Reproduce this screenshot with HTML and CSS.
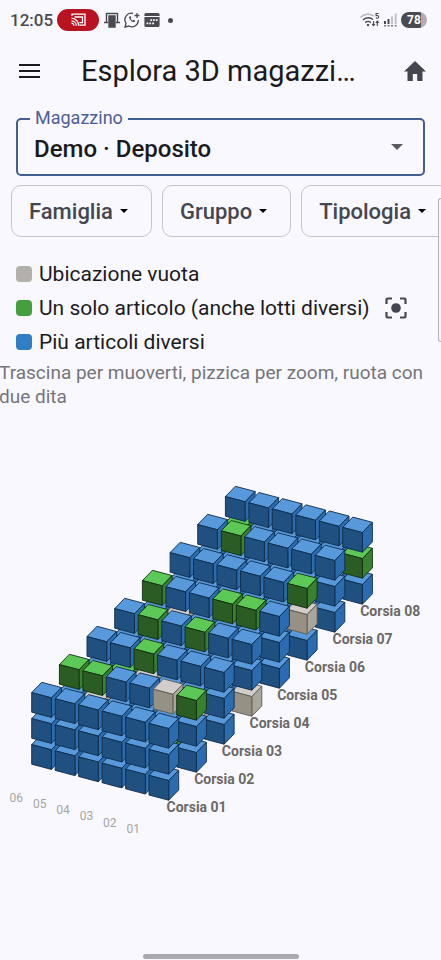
FILE: index.html
```html
<!DOCTYPE html>
<html lang="it">
  <head>
    <meta charset="UTF-8" />
    <meta name="viewport" content="width=device-width, initial-scale=1.0" />
    <title>Esplora 3D magazzino</title>
    <link rel="stylesheet" href="styles.css">
  </head>
  <body>
    <div class="status-bar">
      <span class="clock">12:05</span>
      <span class="cast-pill">
        <svg width="16" height="14" viewBox="0 0 16 14" fill="none" stroke="#fff" stroke-width="1.3">
          <path d="M2 3V1.2h13v11H9.5M4.5 4h8v5.7H9.5" />
          <path d="M1.5 5.2a7.6 7.6 0 0 1 7.2 7.6M1.5 7.8a5 5 0 0 1 4.8 5M1.5 10.2a2.6 2.6 0 0 1 2.4 2.6" />
        </svg>
      </span>
      <svg width="16" height="16" viewBox="0 0 16 16" fill="none" stroke="#4b4a50" stroke-width="1.4">
        <path d="M2.5 10V1.5h11V10M0 10.5h4M12 10.5h4" />
        <path d="M5 4h6v11H5z" fill="#4b4a50" />
      </svg>
      <svg width="16" height="16" viewBox="0 0 16 16" fill="none" stroke="#4b4a50" stroke-width="1.3">
        <path d="M9 1.5A6.3 6.3 0 0 0 2 11l-1 4 4-1A6.3 6.3 0 0 0 14.3 8M10.5 3.5h5M13 1v5" />
        <path d="M5.2 4.8c-.7 1.8 2.8 6 5.3 5.2l.8-1.3-1.8-1-.8.8c-1-.4-1.7-1.2-2-2l.6-.8-.8-1.6z" fill="#4b4a50" stroke="none" />
      </svg>
      <svg width="16" height="16" viewBox="0 0 16 16">
        <path d="M2 1h12a1.6 1.6 0 0 1 1.6 1.6V4H.4V2.6A1.6 1.6 0 0 1 2 1zM.4 5h15.200v8.500A1.600 1.600 0 0 1 14 15H2a1.600 1.600 0 0 1-1.600-1.500z" fill="#4b4a50" />
        <path d="M6.3 7.2h1.8V9H6.3zM9 7.2h1.8V9H9zM11.8 7.2h1.8V9h-1.8zM2.5 10.5h1.8v1.8H2.5zM5.3 10.5h1.8v1.8H5.3zM8.2 10.5H10v1.8H8.2z" fill="#faf8ff" />
      </svg>
      <span class="dot"></span>
      <span class="spacer"></span>
      <svg width="20" height="16" viewBox="0 0 20 16" fill="none" stroke="#4b4a50" stroke-width="1.5">
        <path d="M.5 5.5A10.5 10.5 0 0 1 14 4" stroke="#b9b7be" />
        <path d="M3 8a7.2 7.2 0 0 1 10-.5M5.2 10.6a4 4 0 0 1 5.6 0" />
        <circle cx="8" cy="13" r="1.2" fill="#4b4a50" stroke="none" />
        <path d="M18.6 1.5h-2.5v2.2c1.5-.5 2.7.1 2.6 1.3-.1 1.3-1.7 1.6-2.7.8M13.5 9v4.500m-1.500-1.500 1.500 1.700 1.500-1.700M17.300 14V9.300m-1.500 1.600 1.500-1.700 1.500 1.700" stroke-width="1.1" />
      </svg>
      <svg width="13" height="16" viewBox="0 0 13 16">
        <path d="M0 9h2v3H0zM3.5 7h2v5h-2z" fill="#4b4a50" />
        <path d="M7 4.5h2V12H7zM10.7 1.5h2V12h-2z" fill="#c3c1c8" />
        <path d="M0 13h2v1.5H0zM3.5 13h2v1.5h-2zM7 13h2v1.5H7zM10.7 13h2v1.5h-2z" fill="#77757c" />
      </svg>
      <span class="battery">78</span>
    </div>

    <header class="app-bar">
      <button class="icon-button" aria-label="Menu">
        <svg width="24" height="24" viewBox="0 0 24 24" stroke="#1a1b21" stroke-width="2">
          <path d="M1 6h21M1 12h21M1 18h21" />
        </svg>
      </button>
      <h1>Esplora 3D magazzi…</h1>
      <a class="icon-button" href="#" aria-label="Home">
        <svg width="24" height="24" viewBox="0 0 24 24" fill="#44474f">
          <path d="M9.8 22v-7h4.4v7h5.3v-9.500H23L12 2 1 12.500h3.500V22z" />
        </svg>
      </a>
    </header>

    <main>
      <div class="field">
        <label for="magazzino">Magazzino</label>
        <select id="magazzino">
          <option>Demo · Deposito</option>
        </select>
        <svg class="field-arrow" width="12" height="6" viewBox="0 0 12 6" fill="#5c5c62">
          <path d="M0 0h12L6 6z" />
        </svg>
      </div>

      <div class="filters">
        <button class="chip">Famiglia <svg width="8" height="4" viewBox="0 0 8 4"><path d="M0 0h8L4 4z" /></svg></button>
        <button class="chip">Gruppo <svg width="8" height="4" viewBox="0 0 8 4"><path d="M0 0h8L4 4z" /></svg></button>
        <button class="chip">Tipologia <svg width="8" height="4" viewBox="0 0 8 4"><path d="M0 0h8L4 4z" /></svg></button>
      </div>

      <div class="legend-row">
        <ul class="legend">
          <li><span class="swatch empty"></span>Ubicazione vuota</li>
          <li><span class="swatch single"></span>Un solo articolo (anche lotti diversi)</li>
          <li><span class="swatch multi"></span>Più articoli diversi</li>
        </ul>
        <button class="icon-button" aria-label="Centra vista">
          <svg width="22" height="22" viewBox="0 0 22 22" fill="none" stroke="#44474f" stroke-width="2.2">
            <path d="M1.5 7V2.5a1 1 0 0 1 1-1H7M15 1.5h4.5a1 1 0 0 1 1 1V7M20.5 15v4.5a1 1 0 0 1-1 1H15M7 20.5H2.500a1 1 0 0 1-1-1V15" />
            <circle cx="11" cy="11" r="4.8" fill="#44474f" stroke="none" />
          </svg>
        </button>
      </div>

      <p class="hint">Trascina per muoverti, pizzica per zoom, ruota con due dita</p>

      <svg id="scene" class="scene" viewBox="0 0 441 440"></svg>
    </main>

    <div class="side-panel"></div>
    <div class="home-indicator"></div>

    <script src="scene.js"></script>
  </body>
</html>
```
FILE: styles.css
```css
* {
  box-sizing: border-box;
}
body {
  margin: 0;
  min-height: 100vh;
  display: flex;
  flex-direction: column;
  position: relative;
  background-color: #faf8ff;
  color: #1a1b21;
  font-family: Roboto, sans-serif;
}
button,
select {
  font-family: inherit;
}

/* status bar */
.status-bar {
  display: flex;
  align-items: center;
  gap: 4px;
  height: 40px;
  padding: 0 14px 0 10px;
}
.clock {
  font-size: 17px;
  font-weight: 500;
  color: #4b4a50;
}
.cast-pill {
  display: flex;
  align-items: center;
  justify-content: center;
  width: 42px;
  height: 22px;
  margin-right: 1px;
  border-radius: 11px;
  background-color: #b91220;
}
.dot {
  width: 5px;
  height: 5px;
  margin-left: 4px;
  border-radius: 50%;
  background-color: #4b4a50;
}
.spacer {
  flex: 1;
}
.battery {
  width: 26px;
  height: 16px;
  border-radius: 8px;
  background: linear-gradient(to right, #4b4a50 78%, #b0aeb4 78%);
  color: #fff;
  font-size: 12px;
  font-weight: 700;
  line-height: 16px;
  text-align: center;
}

/* app bar */
.app-bar {
  display: flex;
  align-items: center;
  height: 62px;
  padding: 0 14px 0 18px;
}
.app-bar h1 {
  flex: 1;
  margin: 0 0 0 39px;
  font-size: 29px;
  font-weight: 400;
  white-space: nowrap;
}
.icon-button {
  display: flex;
  padding: 0;
  border: none;
  background: none;
  cursor: pointer;
}

/* warehouse select */
main {
  flex: 1;
}
.field {
  position: relative;
  margin: 16px 16px 0;
}
.field label {
  position: absolute;
  top: -10px;
  left: 14px;
  padding: 0 5px;
  background-color: #faf8ff;
  color: #4b6094;
  font-size: 18px;
  line-height: 20px;
}
.field select {
  width: 100%;
  height: 58px;
  padding: 4px 16px 0;
  border: 2px solid #435e91;
  border-radius: 5px;
  appearance: none;
  background: none;
  color: #1a1b21;
  font-size: 24px;
  font-weight: 500;
}
.field-arrow {
  position: absolute;
  top: 26px;
  right: 22px;
  pointer-events: none;
}

/* filter chips */
.filters {
  display: flex;
  gap: 10px;
  margin-top: 9px;
  padding-left: 11px;
  overflow: hidden;
}
.chip {
  display: flex;
  flex-shrink: 0;
  align-items: center;
  gap: 7px;
  height: 52px;
  padding: 0 23px 0 17px;
  border: 1px solid #c4c4cc;
  border-radius: 10px;
  background: none;
  color: #44474f;
  font-size: 22px;
  font-weight: 500;
}

/* legend */
.legend-row {
  display: flex;
  align-items: center;
  justify-content: space-between;
  padding: 20px 34px 0 16px;
}
.legend {
  margin: 0;
  padding: 0;
  list-style: none;
}
.legend li {
  display: flex;
  align-items: center;
  gap: 7px;
  height: 34px;
  font-size: 21px;
  white-space: nowrap;
}
.swatch {
  width: 16px;
  height: 16px;
  border-radius: 4px;
}
.empty {
  background-color: #b3b1a8;
}
.single {
  background-color: #43a03d;
}
.multi {
  background-color: #307dc4;
}
.hint {
  margin: 2px 0 0 -1px;
  color: #74757c;
  font-size: 19px;
  line-height: 24px;
}

/* 3D view */
.scene {
  display: block;
  width: 100%;
  margin-top: 31px;
}
.aisle-label {
  fill: #6b6966;
  font-size: 14px;
  font-weight: 700;
}
.column-label {
  fill: #a6a4a1;
  font-size: 12px;
}

.side-panel {
  position: absolute;
  top: 198px;
  right: 0;
  width: 3px;
  height: 144px;
  border: 1px solid #b4b4bc;
  border-right: none;
  border-radius: 3px 0 0 3px;
  background-color: #f7f5fc;
}
.home-indicator {
  position: absolute;
  bottom: 1px;
  left: 50%;
  width: 156px;
  height: 5px;
  margin-left: -78px;
  border-radius: 3px;
  background-color: #aba9b0;
}
```
FILE: scene.js
```js
const colors = {
  B: { top: "#5799da", front: "#20507f", side: "#2b6cb0", edge: "#0f2d4c" },
  G: { top: "#5cc957", front: "#2a5c24", side: "#38822f", edge: "#12300f" },
  E: { top: "#d0cdca", front: "#969085", side: "#aaa69c", edge: "#5f5b54" },
};

// one entry per aisle, levels from bottom to top, columns from 06 to 01
const aisles = [
  ["BBBBBB", "BBBBBB", "BBBBBB"],
  ["BBBBGB", "BEBBBB", "GGBBEG"],
  ["BBBBEB", "BGEBBB", "BBGBBB"],
  ["BBBBBE", "BBBBBB", "BGBGBB"],
  ["BBBBBB", "BEBBBB", "GBBGGB"],
  ["BBBBBB", "BBBBBE", "BBBBBG"],
  ["BBBBBB", "BBBBBB", "BGBBBB"],
  ["BBBBBB", "GBBBBG", "BBBBBB"],
];

function face(points, fill, edge) {
  const list = points.map((p) => p[0].toFixed(1) + "," + p[1].toFixed(1)).join(" ");
  return `<polygon points="${list}" fill="${fill}" stroke="${edge}" stroke-width="0.9" stroke-linejoin="round"/>`;
}

function cube(x, y, c) {
  const w = [19.7, 5.2];
  const d = [10, -10.3];
  const h = 19.6;
  const a = [x, y];
  const b = [x + w[0], y + w[1]];
  const e = [b[0] + d[0], b[1] + d[1]];
  const f = [x + d[0], y + d[1]];
  return (
    face([a, b, e, f], c.top, c.edge) +
    face([b, e, [e[0], e[1] + h], [b[0], b[1] + h]], c.side, c.edge) +
    face([a, b, [b[0], b[1] + h], [x, y + h]], c.front, c.edge)
  );
}

let out = "";

// far aisles first, so the near ones cover them
for (let i = aisles.length - 1; i >= 0; i--) {
  for (let level = 0; level < 3; level++) {
    for (let col = 0; col < 6; col++) {
      const x = 31.7 + col * 23.47 + i * 27.67;
      const y = 252.6 + col * 6.15 - i * 28 + (2 - level) * 26;
      out += cube(x, y, colors[aisles[i][level][col]]);
    }
  }
}

for (let i = 0; i < aisles.length; i++) {
  out += `<text class="aisle-label" x="${166.5 + i * 27.67}" y="${372 - i * 28}">Corsia 0${i + 1}</text>`;
}
for (let col = 0; col < 6; col++) {
  out += `<text class="column-label" x="${9.5 + col * 23.4}" y="${361.5 + col * 6.3}">0${6 - col}</text>`;
}

document.getElementById("scene").innerHTML = out;
```
